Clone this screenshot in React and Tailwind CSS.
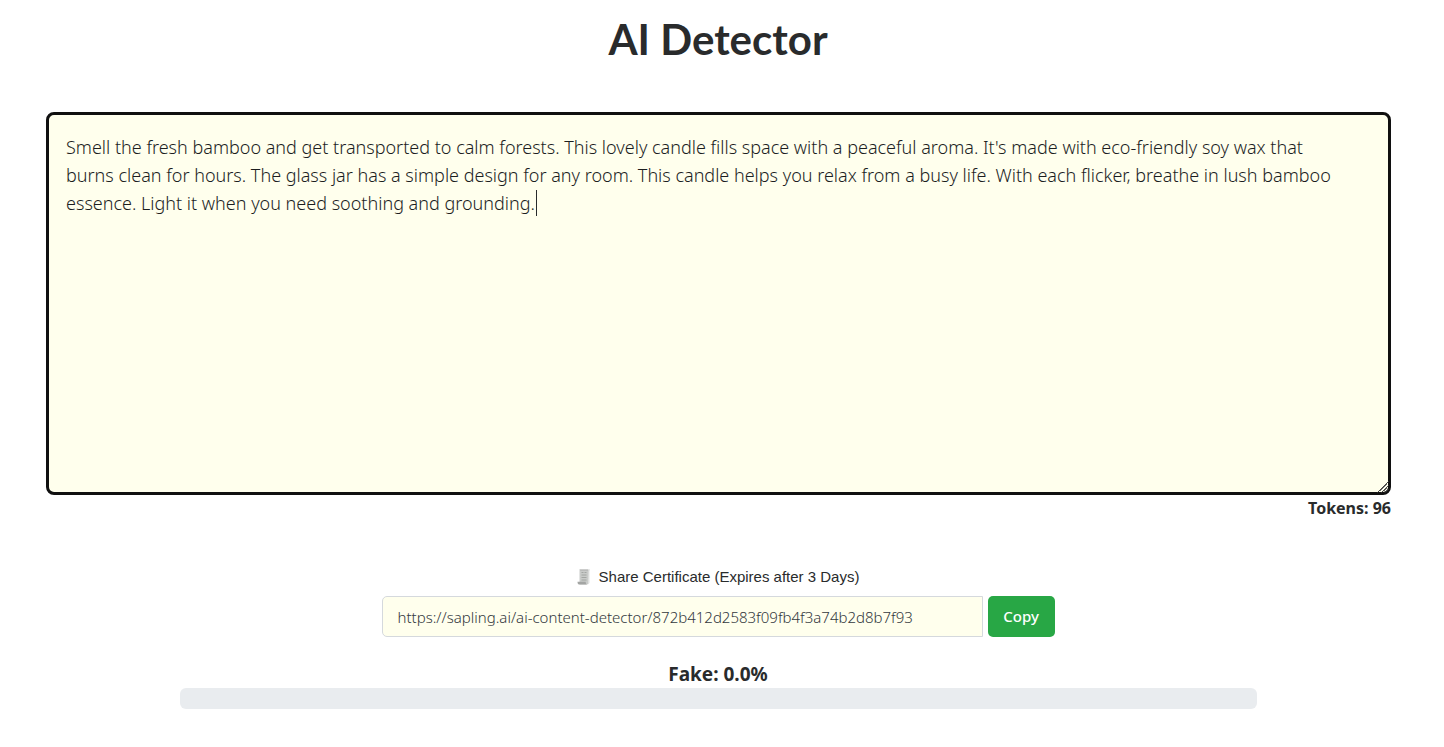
import { useState } from "react";

const SAMPLE =
  "Smell the fresh bamboo and get transported to calm forests. This lovely candle fills space with a peaceful aroma. It's made with eco-friendly soy wax that burns clean for hours. The glass jar has a simple design for any room. This candle helps you relax from a busy life. With each flicker, breathe in lush bamboo essence. Light it when you need soothing and grounding.";

function ScrollIcon() {
  return (
    <svg viewBox="0 0 14 16" className="h-4 w-3.5" aria-hidden="true">
      <path d="M2.500.5H13c-.8.5-1 1.200-1 2V13c0 1.500-.7 2.500-2 2.500H2.500z" fill="#c9cbc9" />
      <path d="M2.500.5H11v1.200H3.500z" fill="#b4b6b4" />
      <path d="M11.500 1h1v13l-1.500 1.500z" fill="#e2e3e2" />
      <path d="M.5 12.800h8.200c0 1.400.4 2.200 1.300 2.700H2C1 15.500.5 14.300.5 12.800z" fill="#a3a5a3" />
      <path d="M4.500 3.500h2M7.500 3.500h2M4.500 6h5M4.500 8.500h5M4.500 11h5" stroke="#999c99" strokeWidth=".8" />
    </svg>
  );
}

function ResizeGrip() {
  return (
    <svg
      viewBox="0 0 12 12"
      className="pointer-events-none absolute bottom-0.5 right-0.5 h-3 w-3"
      aria-hidden="true"
    >
      <path d="M.5 11.500l11-11M4.500 11.500l7-7M8 11.500l3.500-3.500" stroke="#444" strokeWidth="1" fill="none" />
    </svg>
  );
}

export default function App() {
  const [text, setText] = useState(SAMPLE);
  const fake = 0;

  return (
    <main className="flex flex-col items-center pr-2 pt-3 font-['Noto_Sans',sans-serif] text-[#292b2c]">
      <h1 className="font-['Lato',sans-serif] text-[42px] font-bold leading-[54px]">AI Detector</h1>

      <div className="mt-[46px] w-full pl-[46px] pr-[45px]">
        <div className="relative">
          <textarea
            aria-label="Text to check"
            value={text}
            onChange={(e) => setText(e.target.value)}
            className="block h-[383px] w-full resize-y rounded-lg border-3 border-[#101010] bg-[#ffffed] py-[18px] pl-[17px] pr-9 text-[18px] font-light leading-7 text-[#1c1e1f] outline-none"
          />
          {text === SAMPLE && (
            <span className="pointer-events-none absolute left-[490px] top-[78px] h-[26px] w-px bg-[#292b2c]" />
          )}
          <ResizeGrip />
        </div>
        <p className="text-right text-[16px] font-bold leading-[26px]">Tokens: 96</p>
      </div>

      <label
        htmlFor="share"
        className="mt-11 flex items-center gap-2 font-['Liberation_Sans',sans-serif] text-[15px] leading-6"
      >
        <ScrollIcon />
        Share Certificate (Expires after 3 Days)
      </label>
      <div className="mt-[7px] flex w-full max-w-[673px] gap-[5px]">
        <input
          id="share"
          readOnly
          value="https://sapling.ai/ai-content-detector/872b412d2583f09fb4f3a74b2d8b7f93"
          className="h-[41px] min-w-0 flex-1 rounded-l-[5px] border border-[#d5d9dd] bg-[#ffffed] px-[15px] text-[15px] font-light text-[#33383d] outline-none"
        />
        <button type="button" className="h-[41px] w-[67px] rounded-[5px] bg-[#28a745] text-[15px] font-medium text-white">
          Copy
        </button>
      </div>

      <p className="mt-6 text-[19px] font-bold leading-[27px]">Fake: {fake.toFixed(1)}%</p>
      <div
        role="progressbar"
        aria-label="Fake"
        aria-valuenow={fake}
        aria-valuemin={0}
        aria-valuemax={100}
        className="h-[21px] w-3/4 overflow-hidden rounded-md bg-[#e9ecef]"
      >
        <div className="h-full bg-[#28a745]" style={{ width: `${fake}%` }} />
      </div>
    </main>
  );
}
